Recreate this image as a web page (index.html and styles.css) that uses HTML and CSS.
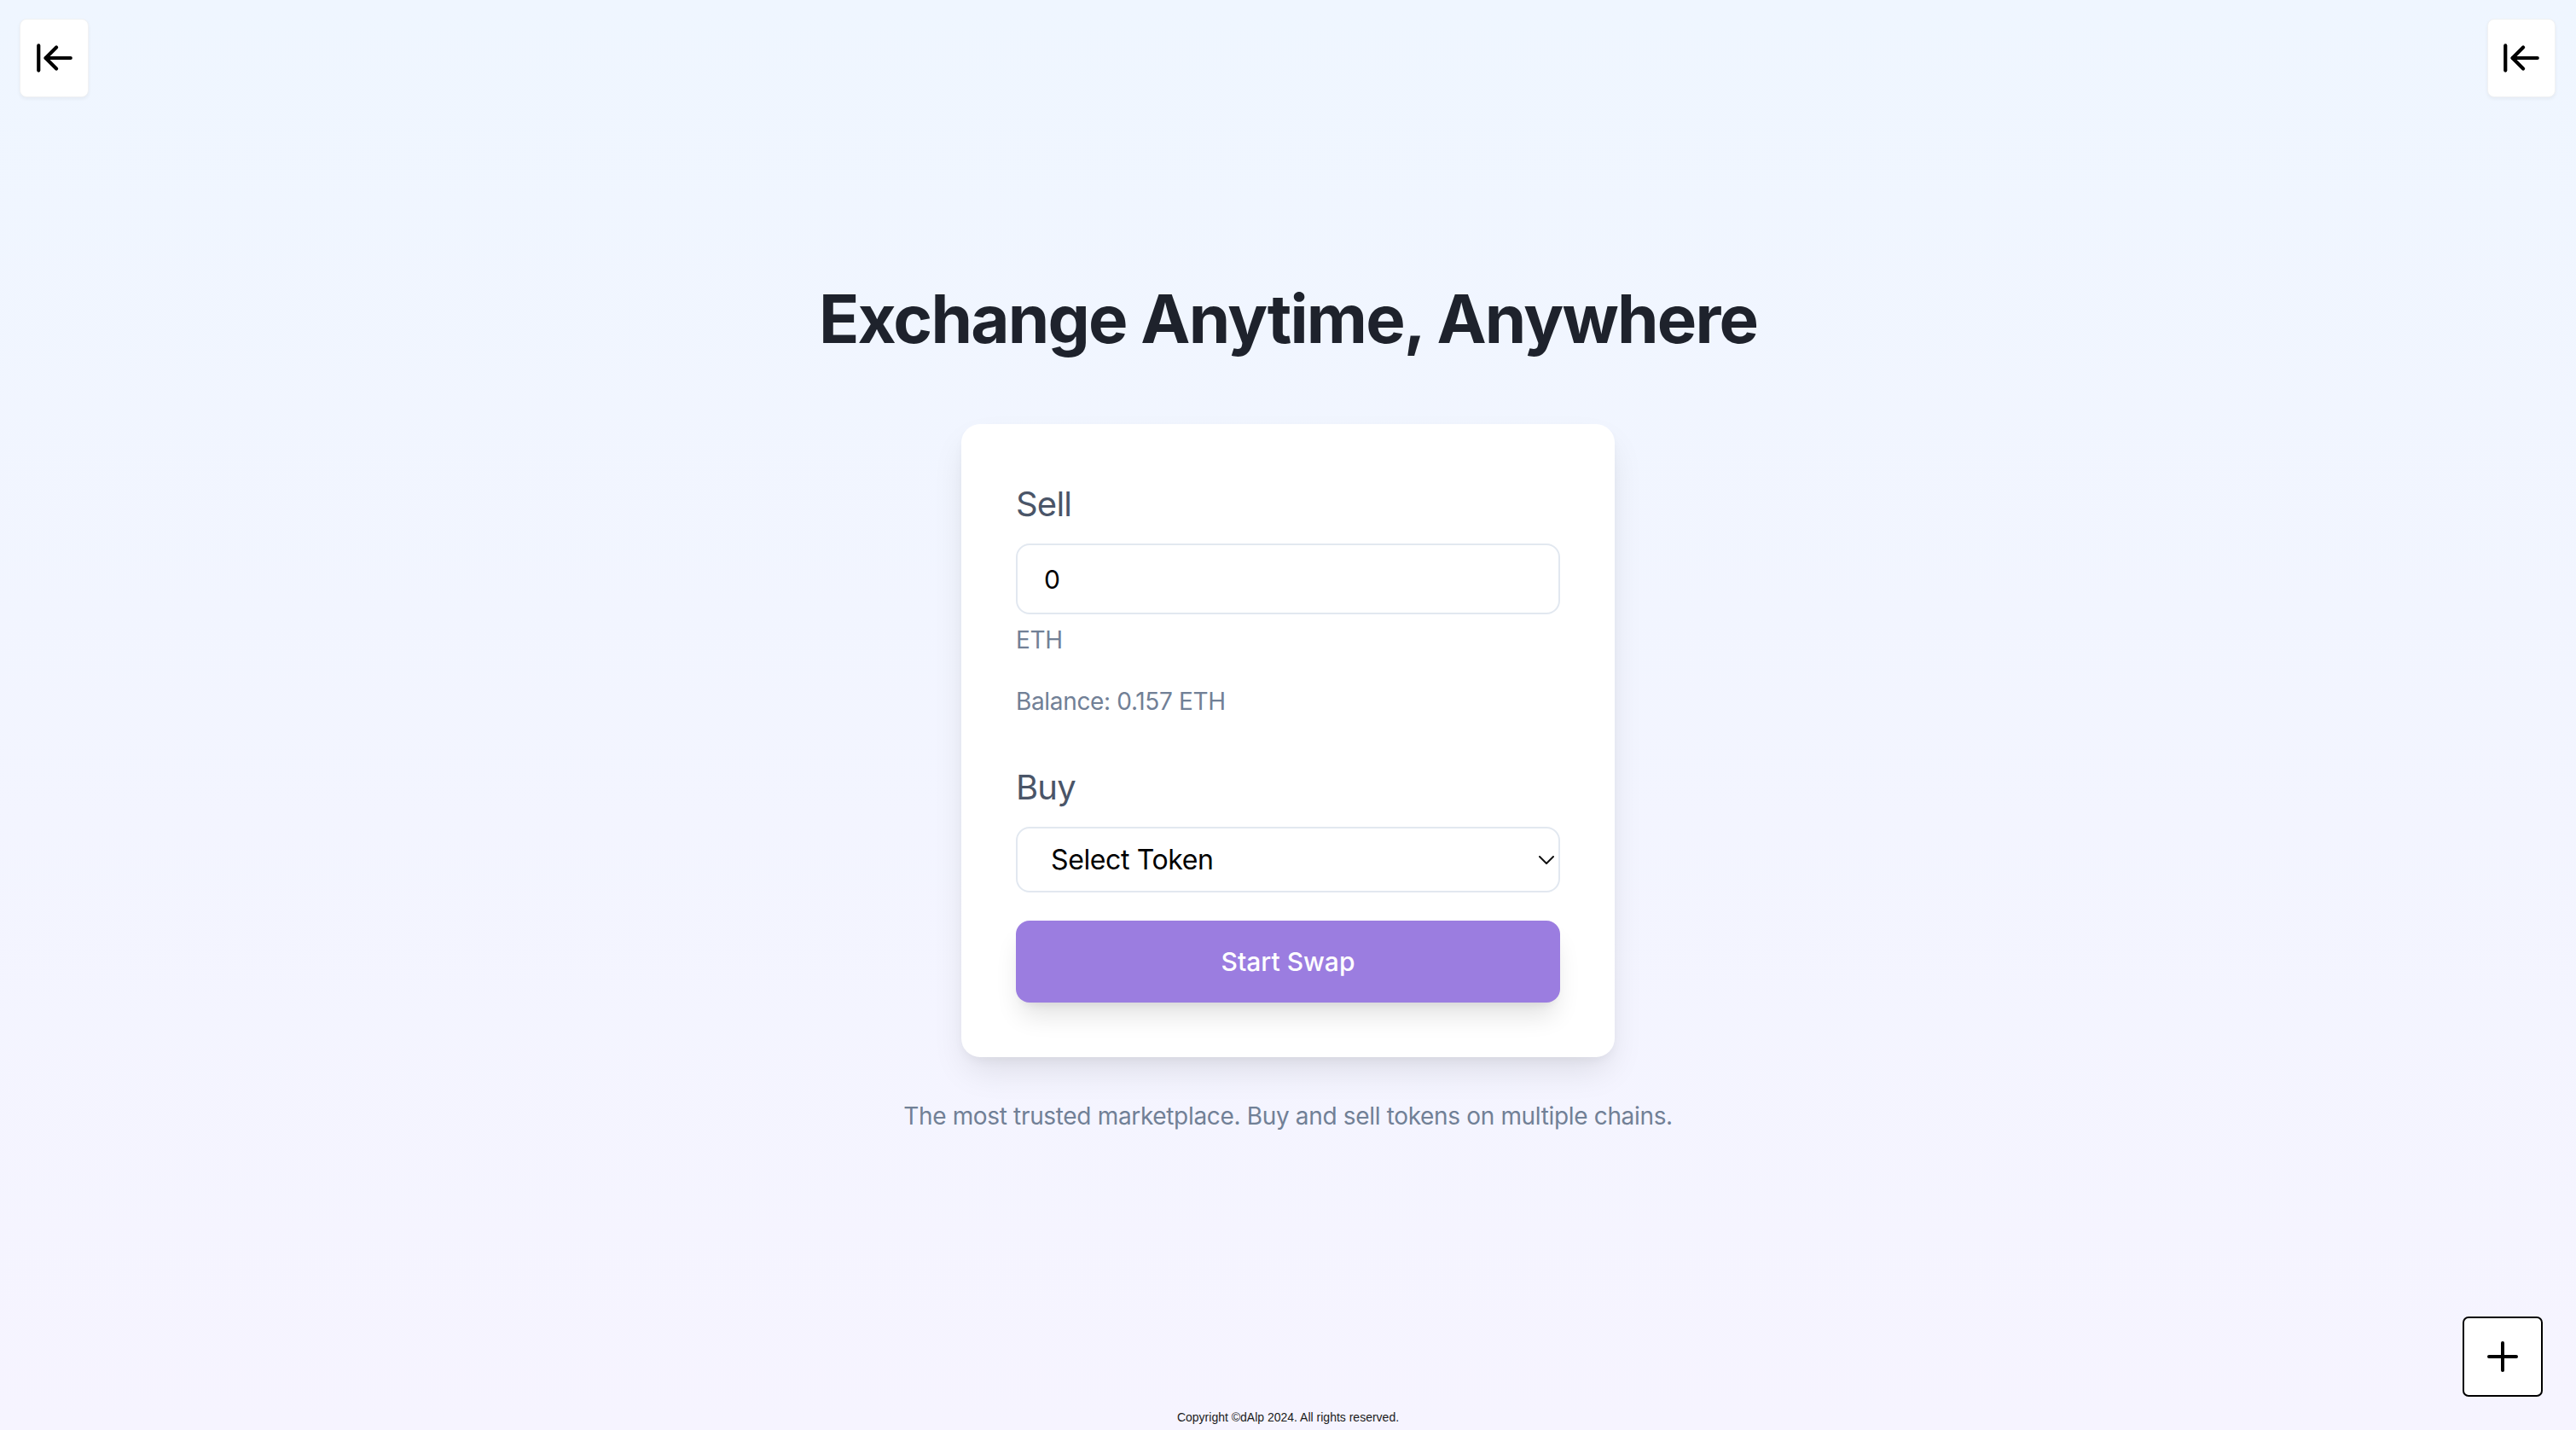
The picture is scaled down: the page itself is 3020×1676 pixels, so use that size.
FILE: index.html
```html
<!DOCTYPE html>
<html lang="en">
<head>
<meta charset="utf-8">
<title>Exchange Anytime, Anywhere</title>
<link rel="stylesheet" href="styles.css">
</head>
<body>
  <header class="topbar">
    <button class="side-toggle side-toggle-left" aria-label="Collapse left sidebar">
      <svg class="toggle-icon" viewBox="0 0 24 24" fill="none" stroke="currentColor" stroke-width="2" stroke-linecap="round" stroke-linejoin="round"><path d="M3 19V5"/><path d="m13 6-6 6 6 6"/><path d="M7 12h14"/></svg>
    </button>
    <button class="side-toggle side-toggle-right" aria-label="Collapse right sidebar">
      <svg class="toggle-icon" viewBox="0 0 24 24" fill="none" stroke="currentColor" stroke-width="2" stroke-linecap="round" stroke-linejoin="round"><path d="M3 19V5"/><path d="m13 6-6 6 6 6"/><path d="M7 12h14"/></svg>
    </button>
  </header>

  <main class="main">
    <h1 class="title">Exchange Anytime, Anywhere</h1>

    <section class="card">
      <label class="field-label" for="sell">Sell</label>
      <input id="sell" class="amount-input" type="text" value="0">
      <div class="unit">ETH</div>
      <div class="balance">Balance: 0.157 ETH</div>

      <label class="field-label buy-label" for="buy">Buy</label>
      <div class="select-wrap">
        <select id="buy" class="token-select">
          <option>Select Token</option>
        </select>
        <svg class="select-chevron" viewBox="0 0 18 10" fill="none" stroke="#111" stroke-width="2" stroke-linecap="round" stroke-linejoin="round"><path d="M1 1l8 8 8-8"/></svg>
      </div>

      <button class="swap-btn">Start Swap</button>
    </section>

    <p class="tagline">The most trusted marketplace. Buy and sell tokens on multiple chains.</p>
  </main>

  <footer class="footer">Copyright ©dAlp 2024. All rights reserved.</footer>

  <button class="fab" aria-label="Add">
    <svg viewBox="0 0 36 36" fill="none" stroke="#000" stroke-width="4" stroke-linecap="round"><path d="M2 18h32"/><path d="M18 2v32"/></svg>
  </button>
</body>
</html>
```

FILE: styles.css
```css
* {
  box-sizing: border-box;
}

html, body {
  margin: 0;
  padding: 0;
}

body {
  min-height: 100vh;
  display: flex;
  flex-direction: column;
  font-family: Inter, "Noto Sans", sans-serif;
  background: linear-gradient(to bottom, #eff6ff 0%, #f6f4ff 100%);
  color: #1e222c;
}

.topbar {
  display: flex;
  justify-content: space-between;
  align-items: flex-start;
  padding: 22px 24px 0 23px;
}

.side-toggle {
  width: 81px;
  height: 92px;
  padding: 0;
  border: 1px solid #f1f2f4;
  border-radius: 8px;
  background: #ffffff;
  box-shadow: 0 2px 4px rgba(0, 0, 0, 0.05);
  display: flex;
  align-items: center;
  justify-content: center;
  color: #000;
  cursor: pointer;
}

.side-toggle-right {
  width: 80px;
}

.toggle-icon {
  width: 50px;
  height: 50px;
}

.main {
  flex: 1;
  display: flex;
  flex-direction: column;
  align-items: center;
}

.title {
  margin: 213px 0 0;
  font-size: 78px;
  line-height: 94px;
  font-weight: 700;
  letter-spacing: -0.023em;
  color: #1e222c;
}

.card {
  margin-top: 76px;
  width: 766px;
  padding: 64px;
  background: #ffffff;
  border-radius: 22px;
  box-shadow: 0 20px 40px -6px rgba(0, 0, 0, 0.1), 0 6px 14px -4px rgba(0, 0, 0, 0.06);
  display: flex;
  flex-direction: column;
}

.field-label {
  display: block;
  font-size: 40px;
  line-height: 60px;
  font-weight: 400;
  color: #4a5568;
  letter-spacing: -0.02em;
}

.buy-label {
  margin-top: 51px;
}

.amount-input {
  margin-top: 16px;
  width: 100%;
  height: 83px;
  padding: 0 31px;
  border: 2px solid #e2e8f0;
  border-radius: 16px;
  background: #ffffff;
  font-family: Inter, "Noto Sans", sans-serif;
  font-size: 30px;
  color: #000;
  outline: none;
}

.unit {
  margin-top: 10px;
  font-size: 28px;
  line-height: 40px;
  letter-spacing: -0.012em;
  color: #718096;
}

.balance {
  margin-top: 32px;
  font-size: 28px;
  line-height: 40px;
  letter-spacing: -0.012em;
  color: #718096;
}

.select-wrap {
  position: relative;
  margin-top: 16px;
}

.token-select {
  -webkit-appearance: none;
  appearance: none;
  width: 100%;
  height: 77px;
  padding: 0 60px 0 39px;
  border: 2px solid #e2e8f0;
  border-radius: 16px;
  background: #ffffff;
  font-family: Inter, "Noto Sans", sans-serif;
  font-size: 32px;
  letter-spacing: -0.012em;
  color: #000;
  outline: none;
}

.select-chevron {
  position: absolute;
  right: 7px;
  top: 34px;
  width: 18px;
  height: 10px;
  pointer-events: none;
}

.swap-btn {
  margin-top: 33px;
  width: 100%;
  height: 96px;
  border: none;
  border-radius: 16px;
  background: #9b7de0;
  color: #ffffff;
  font-family: Inter, "Noto Sans", sans-serif;
  font-size: 30px;
  font-weight: 500;
  box-shadow: 0 20px 30px -6px rgba(0, 0, 0, 0.12), 0 8px 12px -8px rgba(0, 0, 0, 0.1);
  cursor: pointer;
}

.tagline {
  margin: 49px 0 0;
  font-size: 28px;
  line-height: 40px;
  letter-spacing: -0.012em;
  color: #718096;
}

.footer {
  text-align: center;
  font-family: "Liberation Sans", Arial, sans-serif;
  font-size: 14px;
  line-height: 16px;
  color: #1a1a1a;
  padding-bottom: 7px;
}

.fab {
  position: fixed;
  right: 39px;
  bottom: 39px;
  width: 94px;
  height: 94px;
  padding: 0;
  border: 2px solid #000;
  border-radius: 7px;
  background: #ffffff;
  display: flex;
  align-items: center;
  justify-content: center;
  cursor: pointer;
}

.fab svg {
  width: 36px;
  height: 36px;
}
```
